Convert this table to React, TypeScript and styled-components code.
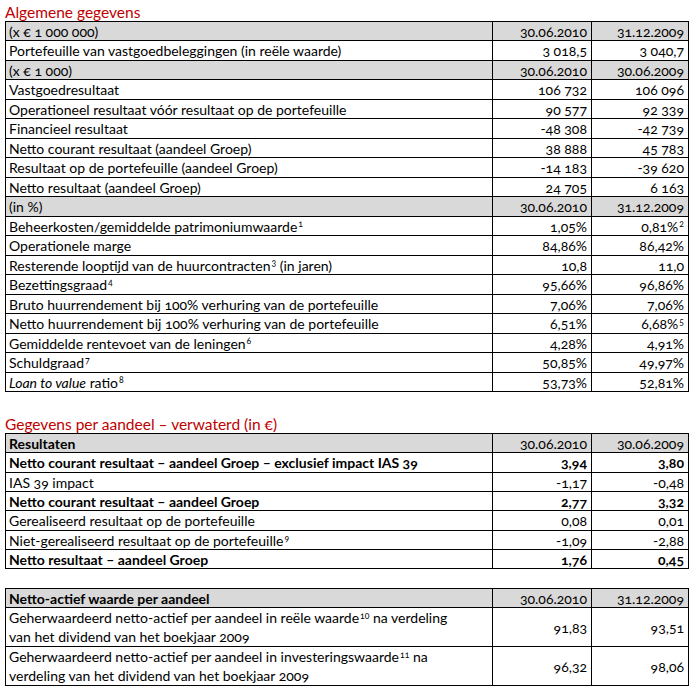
import React from "react";
import styled, { createGlobalStyle } from "styled-components";

const GlobalStyle = createGlobalStyle`
  html, body { margin: 0; padding: 0; background: #fff; }
  body {
    font-family: Lato, "Open Sans", "Liberation Sans", sans-serif;
    color: #000;
    font-variant-numeric: oldstyle-nums;
  }
`;

const Page = styled.div`
  width: 699px;
  padding: 0 0 0 5px;
  box-sizing: border-box;
`;

const Title = styled.div<{ $gap?: number }>`
  height: 21px;
  margin-top: ${(p) => p.$gap ?? 0}px;
  display: flex;
  align-items: flex-end;
  padding-bottom: 1px;
  box-sizing: border-box;
  font-size: 15.5px;
  color: #c00000;
  line-height: 1;
`;

const Table = styled.div<{ $gap?: number }>`
  width: 684px;
  margin-top: ${(p) => p.$gap ?? 0}px;
  border-left: 1px solid #000;
  border-top: 1px solid #000;
  box-sizing: border-box;
  display: flex;
  flex-direction: column;
`;

const Row = styled.div<{ $head?: boolean; $bold?: boolean; $h: number }>`
  display: grid;
  grid-template-columns: 487px 99px 97px;
  grid-template-rows: minmax(0, 1fr);
  height: ${(p) => p.$h}px;
  flex: none;
  background: ${(p) => (p.$head ? "#d9d9d9" : "#fff")};
  font-weight: ${(p) => (p.$bold ? 700 : 400)};
`;

const Cell = styled.div<{ $right?: boolean; $regular?: boolean }>`
  min-height: 0;
  border-right: 1px solid #000;
  border-bottom: 1px solid #000;
  box-sizing: border-box;
  display: flex;
  align-items: center;
  justify-content: ${(p) => (p.$right ? "flex-end" : "flex-start")};
  padding: 0 4px 0 3px;
  font-size: 14px;
  line-height: 19px;
  white-space: nowrap;
  font-weight: ${(p) => (p.$regular ? 400 : "inherit")};
`;

const Sup = styled.sup`
  font-size: 0.62em;
  line-height: 0;
  vertical-align: 0.5em;
  margin-left: 1px;
`;

const Italic = styled.i`
  font-style: italic;
`;

type R = {
  label: React.ReactNode;
  a: React.ReactNode;
  b: React.ReactNode;
  head?: boolean;
  bold?: boolean;
  h?: number;
};

const general: R[] = [
  { label: "(x € 1 000 000)", a: "30.06.2010", b: "31.12.2009", head: true },
  { label: "Portefeuille van vastgoedbeleggingen (in reële waarde)", a: "3 018,5", b: "3 040,7" },
  { label: "(x € 1 000)", a: "30.06.2010", b: "30.06.2009", head: true },
  { label: "Vastgoedresultaat", a: "106 732", b: "106 096" },
  { label: "Operationeel resultaat vóór resultaat op de portefeuille", a: "90 577", b: "92 339" },
  { label: "Financieel resultaat", a: "-48 308", b: "-42 739" },
  { label: "Netto courant resultaat (aandeel Groep)", a: "38 888", b: "45 783" },
  { label: "Resultaat op de portefeuille (aandeel Groep)", a: "-14 183", b: "-39 620" },
  { label: "Netto resultaat (aandeel Groep)", a: "24 705", b: "6 163" },
  { label: "(in %)", a: "30.06.2010", b: "31.12.2009", head: true },
  {
    label: <>Beheerkosten/gemiddelde patrimoniumwaarde<Sup>1</Sup></>,
    a: "1,05%",
    b: <>0,81%<Sup>2</Sup></>,
  },
  { label: "Operationele marge", a: "84,86%", b: "86,42%" },
  {
    label: <>Resterende looptijd van de huurcontracten<Sup>3</Sup> (in jaren)</>,
    a: "10,8",
    b: "11,0",
  },
  { label: <>Bezettingsgraad<Sup>4</Sup></>, a: "95,66%", b: "96,86%" },
  { label: "Bruto huurrendement bij 100% verhuring van de portefeuille", a: "7,06%", b: "7,06%" },
  {
    label: "Netto huurrendement bij 100% verhuring van de portefeuille",
    a: "6,51%",
    b: <>6,68%<Sup>5</Sup></>,
  },
  { label: <>Gemiddelde rentevoet van de leningen<Sup>6</Sup></>, a: "4,28%", b: "4,91%" },
  { label: <>Schuldgraad<Sup>7</Sup></>, a: "50,85%", b: "49,97%" },
  {
    label: <><Italic>Loan to value</Italic> ratio<Sup>8</Sup></>,
    a: "53,73%",
    b: "52,81%",
  },
];

const perShare: R[] = [
  { label: "Resultaten", a: "30.06.2010", b: "30.06.2009", head: true, bold: true },
  {
    label: "Netto courant resultaat – aandeel Groep – exclusief impact IAS 39",
    a: "3,94",
    b: "3,80",
    bold: true,
  },
  { label: "IAS 39 impact", a: "-1,17", b: "-0,48" },
  { label: "Netto courant resultaat – aandeel Groep", a: "2,77", b: "3,32", bold: true },
  { label: "Gerealiseerd resultaat op de portefeuille", a: "0,08", b: "0,01" },
  {
    label: <>Niet-gerealiseerd resultaat op de portefeuille<Sup>9</Sup></>,
    a: "-1,09",
    b: "-2,88",
  },
  { label: "Netto resultaat – aandeel Groep", a: "1,76", b: "0,45", bold: true },
];

const navRows: R[] = [
  { label: "Netto-actief waarde per aandeel", a: "30.06.2010", b: "31.12.2009", head: true, bold: true },
  {
    label: (
      <>
        Geherwaardeerd netto-actief per aandeel in reële waarde<Sup>10</Sup> na verdeling
        <br />
        van het dividend van het boekjaar 2009
      </>
    ),
    a: "91,83",
    b: "93,51",
    h: 39,
  },
  {
    label: (
      <>
        Geherwaardeerd netto-actief per aandeel in investeringswaarde<Sup>11</Sup> na
        <br />
        verdeling van het dividend van het boekjaar 2009
      </>
    ),
    a: "96,32",
    b: "98,06",
    h: 39,
  },
];

const DataTable: React.FC<{ rows: R[]; gap?: number; pattern: number[] }> = ({
  rows,
  gap,
  pattern,
}) => (
  <Table $gap={gap}>
    {rows.map((r, i) => (
      <Row key={i} $head={r.head} $bold={r.bold} $h={r.h ?? pattern[i % pattern.length]}>
        <Cell>
          <span>{r.label}</span>
        </Cell>
        <Cell $right $regular={r.head}>
          <span>{r.a}</span>
        </Cell>
        <Cell $right $regular={r.head}>
          <span>{r.b}</span>
        </Cell>
      </Row>
    ))}
  </Table>
);

export default function App() {
  return (
    <Page>
      <GlobalStyle />
      <Title>Algemene gegevens</Title>
      <DataTable rows={general} pattern={[19, 20]} />
      <Title $gap={20}>Gegevens per aandeel – verwaterd (in €)</Title>
      <DataTable rows={perShare} pattern={[19, 20, 19]} />
      <DataTable rows={navRows} gap={19} pattern={[19]} />
    </Page>
  );
}
